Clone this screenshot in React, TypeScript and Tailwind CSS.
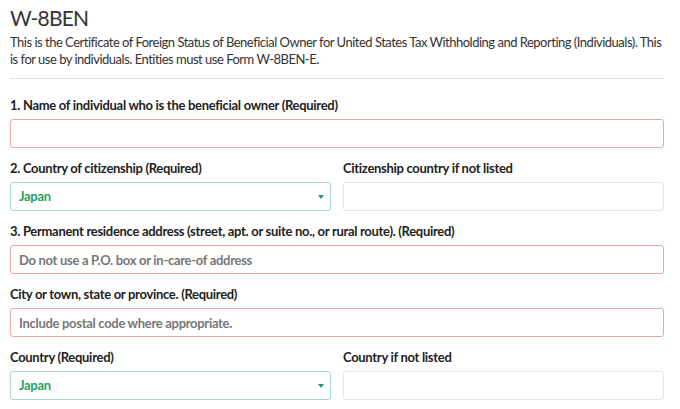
import React from "react";

const Label: React.FC<{ children: React.ReactNode }> = ({ children }) => (
  <label className="block text-[13px] font-bold leading-[18px] tracking-[-0.3px] text-[#222] mb-[5px]">
    {children}
  </label>
);

const TextInput: React.FC<{ placeholder?: string; tone?: "error" | "plain" }> = ({
  placeholder,
  tone = "plain",
}) => (
  <input
    type="text"
    placeholder={placeholder}
    className={`block w-full h-[29px] rounded-[3px] border bg-white px-[8px] text-[13px] font-bold tracking-[-0.3px] text-[#333] placeholder:text-[#777] outline-none ${
      tone === "error" ? "border-[#f2a3a3]" : "border-[#e6e6e6]"
    }`}
  />
);

const CountrySelect: React.FC = () => (
  <div className="relative h-[29px] rounded-[3px] border border-[#a6dcc5] bg-white flex items-center px-[8px]">
    <span className="text-[13px] font-bold tracking-[-0.3px] text-[#1fa463]">Japan</span>
    <span className="absolute right-[6px] top-[12px] w-0 h-0 border-l-[3px] border-r-[3px] border-t-[4px] border-l-transparent border-r-transparent border-t-[#1fa463]" />
  </div>
);

export default function App() {
  return (
    <div className="bg-white px-[10px] pt-[4px] w-[680px] h-[409px] overflow-hidden font-['Lato',Arial,sans-serif] text-[#333]">
      <h1 className="text-[21px] font-normal leading-[28px] tracking-[-0.8px] text-[#333]">W-8BEN</h1>
      <p className="mt-[2px] text-[13px] leading-[17px] tracking-[-0.5px] text-[#333] w-[658px]">
        This is the Certificate of Foreign Status of Beneficial Owner for United States Tax Withholding and Reporting (Individuals). This is for use by individuals. Entities must use Form W-8BEN-E.
      </p>
      <hr className="mt-[10px] w-[654px] border-t border-[#e3e3e3]" />

      <div className="w-[654px] mt-[17px] flex flex-col gap-[11px]">
        <div>
          <Label>1. Name of individual who is the beneficial owner (Required)</Label>
          <TextInput tone="error" />
        </div>

        <div className="grid grid-cols-2 gap-x-[12px]">
          <div>
            <Label>2. Country of citizenship (Required)</Label>
            <CountrySelect />
          </div>
          <div>
            <Label>Citizenship country if not listed</Label>
            <TextInput />
          </div>
        </div>

        <div>
          <Label>3. Permanent residence address (street, apt. or suite no., or rural route). (Required)</Label>
          <TextInput tone="error" placeholder="Do not use a P.O. box or in-care-of address" />
        </div>

        <div>
          <Label>City or town, state or province. (Required)</Label>
          <TextInput tone="error" placeholder="Include postal code where appropriate." />
        </div>

        <div className="grid grid-cols-2 gap-x-[12px]">
          <div>
            <Label>Country (Required)</Label>
            <CountrySelect />
          </div>
          <div>
            <Label>Country if not listed</Label>
            <TextInput />
          </div>
        </div>
      </div>
    </div>
  );
}
